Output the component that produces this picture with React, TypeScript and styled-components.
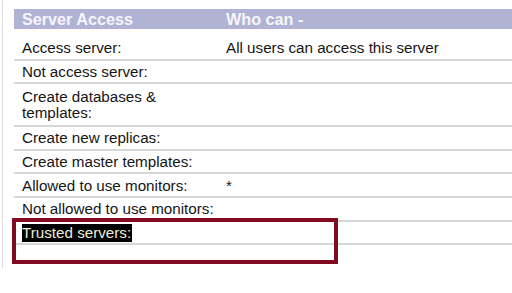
import React from "react";
import styled, { createGlobalStyle } from "styled-components";

const GlobalStyle = createGlobalStyle`
  html, body {
    margin: 0;
    padding: 0;
    background: #ffffff;
  }
  body {
    font-family: "Liberation Sans", Arial, sans-serif;
    color: #161616;
  }
`;

const Page = styled.div`
  position: relative;
  width: 512px;
  height: 293px;
  overflow: hidden;
  background: #ffffff;
`;

const Pane = styled.div`
  margin-left: 2px;
  height: 268px;
  border-left: 1px solid #dcdcdc;
  padding: 9px 0 0 11px;
  box-sizing: border-box;
`;

const Table = styled.div`
  display: flex;
  flex-direction: column;
`;

const HeaderRow = styled.div`
  display: grid;
  grid-template-columns: 204px 1fr;
  height: 20px;
  align-items: center;
  background: #b1b3d4;
  color: #f6f6fb;
  font-weight: bold;
  font-size: 16.2px;
  margin-bottom: 8px;
`;

const HeaderCell = styled.div`
  padding-left: 8px;
  white-space: nowrap;
  line-height: 20px;
`;

const Row = styled.div<{ $tall?: boolean; $last?: boolean }>`
  display: grid;
  grid-template-columns: 204px 1fr;
  align-items: center;
  box-sizing: border-box;
  height: ${(p) => (p.$tall ? "43px" : "23.6px")};
  border-bottom: ${(p) => (p.$last ? "none" : "2px solid #d6d6d6")};
  font-size: 15.2px;
`;

const Cell = styled.div`
  padding-left: 8px;
  line-height: 16px;
  white-space: nowrap;
  padding-top: 1px;
`;

const Selected = styled.span`
  background: #000000;
  color: #eeeed8;
  line-height: 18px;
  display: inline-block;
  padding-right: 1px;
`;

const Callout = styled.div`
  position: absolute;
  left: 12px;
  top: 218px;
  width: 326px;
  height: 46px;
  box-sizing: border-box;
  border: 4px solid #800b21;
  pointer-events: none;
`;

type Entry = { label: React.ReactNode; value?: string; tall?: boolean };

const entries: Entry[] = [
  { label: "Access server:", value: "All users can access this server" },
  { label: "Not access server:" },
  {
    label: (
      <>
        Create databases &amp;
        <br />
        templates:
      </>
    ),
    tall: true,
  },
  { label: "Create new replicas:" },
  { label: "Create master templates:" },
  { label: "Allowed to use monitors:", value: "*" },
  { label: "Not allowed to use monitors:" },
  { label: <Selected>Trusted servers:</Selected> },
];

export default function App() {
  return (
    <Page>
      <GlobalStyle />
      <Pane>
        <Table>
          <HeaderRow>
            <HeaderCell>Server Access</HeaderCell>
            <HeaderCell>Who can -</HeaderCell>
          </HeaderRow>
          {entries.map((e, i) => (
            <Row key={i} $tall={e.tall}>
              <Cell>{e.label}</Cell>
              <Cell>{e.value}</Cell>
            </Row>
          ))}
          <Row $last />
        </Table>
      </Pane>
      <Callout />
    </Page>
  );
}
